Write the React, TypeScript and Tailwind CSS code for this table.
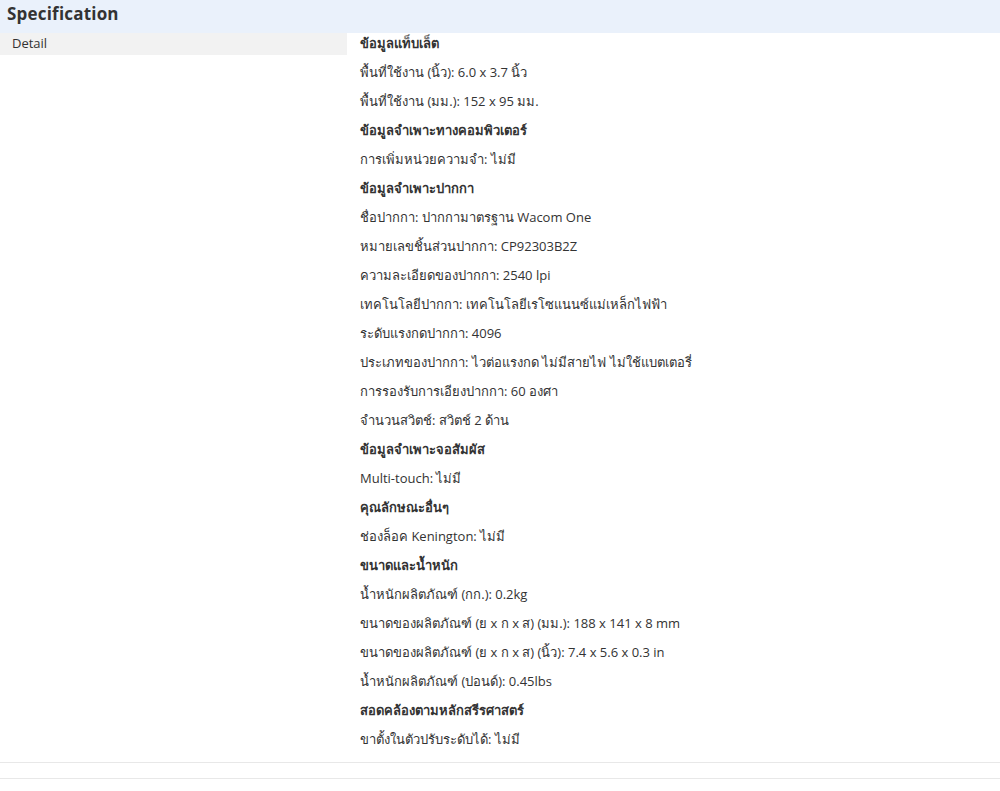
const specs: { text: string; heading?: boolean }[] = [
  { text: 'ข้อมูลแท็บเล็ต', heading: true },
  { text: 'พื้นที่ใช้งาน (นิ้ว): 6.0 x 3.7 นิ้ว' },
  { text: 'พื้นที่ใช้งาน (มม.): 152 x 95 มม.' },
  { text: 'ข้อมูลจำเพาะทางคอมพิวเตอร์', heading: true },
  { text: 'การเพิ่มหน่วยความจำ: ไม่มี' },
  { text: 'ข้อมูลจำเพาะปากกา', heading: true },
  { text: 'ชื่อปากกา: ปากกามาตรฐาน Wacom One' },
  { text: 'หมายเลขชิ้นส่วนปากกา: CP92303B2Z' },
  { text: 'ความละเอียดของปากกา: 2540 lpi' },
  { text: 'เทคโนโลยีปากกา: เทคโนโลยีเรโซแนนซ์แม่เหล็กไฟฟ้า' },
  { text: 'ระดับแรงกดปากกา: 4096' },
  { text: 'ประเภทของปากกา: ไวต่อแรงกด ไม่มีสายไฟ ไม่ใช้แบตเตอรี่' },
  { text: 'การรองรับการเอียงปากกา: 60 องศา' },
  { text: 'จำนวนสวิตช์: สวิตช์ 2 ด้าน' },
  { text: 'ข้อมูลจำเพาะจอสัมผัส', heading: true },
  { text: 'Multi-touch: ไม่มี' },
  { text: 'คุณลักษณะอื่นๆ', heading: true },
  { text: 'ช่องล็อค Kenington: ไม่มี' },
  { text: 'ขนาดและน้ำหนัก', heading: true },
  { text: 'น้ำหนักผลิตภัณฑ์ (กก.): 0.2kg' },
  { text: 'ขนาดของผลิตภัณฑ์ (ย x ก x ส) (มม.): 188 x 141 x 8 mm' },
  { text: 'ขนาดของผลิตภัณฑ์ (ย x ก x ส) (นิ้ว): 7.4 x 5.6 x 0.3 in' },
  { text: 'น้ำหนักผลิตภัณฑ์ (ปอนด์): 0.45lbs' },
  { text: 'สอดคล้องตามหลักสรีรศาสตร์', heading: true },
  { text: 'ขาตั้งในตัวปรับระดับได้: ไม่มี' },
];

export default function App() {
  return (
    <div className="w-[1000px] min-h-[791px] bg-white text-[#333] font-['Open_Sans','Noto_Sans',sans-serif]">
      <div className="h-[33px] bg-[#eaf1fb] flex items-start pt-[1px] px-[7px]">
        <h2 className="text-[17px] leading-[25px] font-bold text-[#333] tracking-[0.2px]">Specification</h2>
      </div>

      <div className="flex pb-[11px] border-b border-[#e8e8e8]">
        <div className="w-[347px] shrink-0">
          <div className="h-[22px] bg-[#f2f2f2] flex items-center pl-[12px] text-[13px]">Detail</div>
        </div>
        <div className="flex-1 pl-[13px] flex flex-col gap-[7px]">
          {specs.map((s, i) => (
            <div
              key={i}
              className={`h-[22px] flex items-center text-[13px] ${s.heading ? 'font-bold' : ''}`}
            >
              {s.text}
            </div>
          ))}
        </div>
      </div>

      <div className="h-[16px] border-b border-[#e8e8e8]" />
    </div>
  );
}
